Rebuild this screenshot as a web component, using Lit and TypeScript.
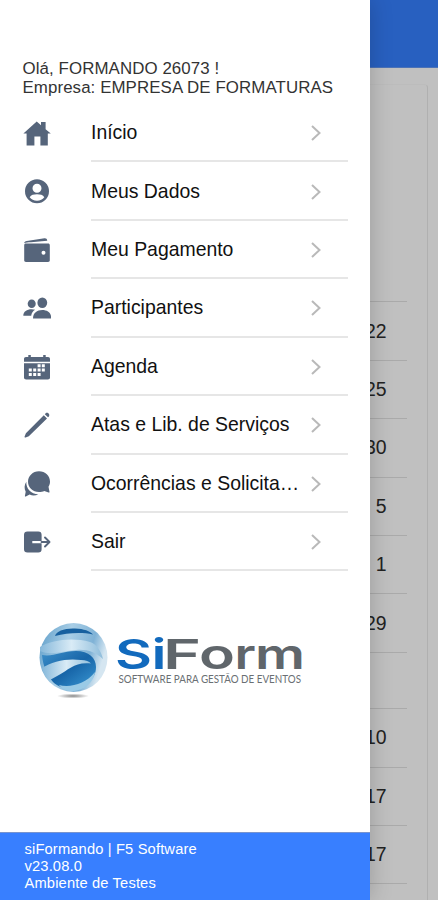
import { LitElement, html, css, svg } from "lit";
import { customElement } from "lit/decorators.js";

const icons = {
  home: svg`<path d="M.4 14.500 13.700 2.500l4.300 3.700V3h4.600v7.200l5.200 4.300h-3V26.500h-7.400v-9h-6v9H3.600v-12z"/>`,
  person: svg`<path fill-rule="evenodd" d="M14 2.3a12 12 0 1 0 0 24 12 12 0 0 0 0-24zm0 4.500a4.500 4.500 0 1 1 0 9 4.500 4.500 0 0 1 0-9zm0 17c-3.200 0-5.600-1.200-7.300-3.500 1.200-2.400 4.200-3 7.300-3s6.100.6 7.300 3c-1.700 2.300-4.100 3.500-7.300 3.500z"/>`,
  wallet: svg`<path d="M1.200 7.300C1.400 6 2.300 5.300 3.700 5.100L21.500 2.300c1.500-.2 2.600.6 2.700 2v.5L8 6.300c-3 .1-5 .4-6.800 1z"/><path fill-rule="evenodd" d="M3 7.600h22c1.200 0 1.800.7 1.800 1.700v15c0 1-.6 1.700-1.800 1.700H3c-1.200 0-1.800-.7-1.800-1.700v-15C1.200 8.300 1.800 7.600 3 7.600zm17.500 7.100a2 2 0 1 0 0 4 2 2 0 0 0 0-4z"/>`,
  people: svg`<ellipse cx="8.700" cy="9.800" rx="4" ry="4.300"/><path d="M.3 21.700c0-4.200 3.700-6.500 8.200-6.500 1.400 0 2.500.2 3.600.6-2.200 1.300-3.500 3.300-3.900 5.900z"/><ellipse cx="19.300" cy="8.800" rx="4.900" ry="5.200"/><path d="M10 24.400c0-5.400 4-8.400 9.300-8.400s9 3 9 8.400z"/>`,
  calendar: svg`<path d="M1 8.700V6c0-1.300.7-2 2-2h2.300V2h2.500v2h12.400V2h2.500v2H25c1.300 0 2 .7 2 2v2.700z"/><path d="M1 10.300h26v14c0 1.400-.8 2.200-2.200 2.200H3.200c-1.400 0-2.200-.8-2.200-2.200z"/><path fill="#fff" d="M14.600 11.200h3v3h-3zm4.200 0h3v3h-3zM5.800 15.500h3v3h-3zm4.400 0h3v3h-3zm4.400 0h3v3h-3zm4.200 0h3v3h-3zM5.800 19.900h3v3h-3zm4.400 0h3v3h-3zm4.400 0h3v3h-3z"/>`,
  pen: svg`<path d="m20.800 4.200 3.200 3.200L5.800 25.200 2.600 26.500c-.7.200-1.300-.4-1-1.100l1.300-3.200zM21.800 3.200l.9-.9c1.900-1.500 4.700 1.200 3.200 3.100l-.9.900z"/>`,
  chat: svg`<path d="M16 1.200c6.300 0 11 4.400 11 10.500 0 2.200-.7 3.500-1.500 5l1 5c.1.700-.3 1-.9.800l-4.300-1.500c-1.500.7-3.200 1.100-5.300 1.100-6.300 0-11-4.500-11-10.300S9.700 1.200 16 1.200z"/><path d="M3.300 11.700c-.4 7 4.700 12.200 12 12.500-2.700 1.600-5.900 1.700-8.700.4l-3.800 1.900c-.6.300-1 0-.9-.6l.8-4.100c-1.600-3.300-1.500-7 .6-10.100z"/>`,
  exit: svg`<path fill-rule="evenodd" d="M4.500 3.500h10.800c2.200 0 3.300 1.200 3.300 3.300v6.100H9.300v2.300h9.300v6c0 2.200-1.100 3.300-3.300 3.300H4.500c-2.300 0-3.500-1.100-3.500-3.300V6.800c0-2.100 1.200-3.300 3.500-3.300z"/><path fill="none" stroke="#56657b" stroke-width="1.900" stroke-linecap="round" stroke-linejoin="round" d="M18.500 14h7.800M22 9.500l4.500 4.500-4.500 4.500"/>`,
};

@customElement("app-root")
export class AppRoot extends LitElement {
  static styles = css`
    :host {
      display: block;
      position: relative;
      height: 900px;
      overflow: hidden;
      background: #c0c0c0;
      color: #222;
      font-family: "Liberation Sans", Arial, sans-serif;
    }
    * { box-sizing: border-box; }
    .page { height: 900px; }
    .toolbar { height: 68px; background: #2860c0; border-bottom: 1px solid #4b72b7; }
    .card {
      height: 816px;
      margin: 16px 10.500px 0 20px;
      padding: 159px 20px 0 0;
      border-right: 1px solid #b0b0b0;
      border-top: 1px solid #bcbcbc;
      border-top-right-radius: 4px;
    }
    .line {
      height: 58.400px;
      border-bottom: 1px solid #aaa;
      display: flex;
      align-items: center;
      justify-content: flex-end;
      padding-right: 20px;
      font-size: 19.400px;
    }
    .blank { height: 56.500px; }
    .menu {
      position: absolute;
      inset: 0 auto 0 0;
      width: 370px;
      background: #fff;
      display: flex;
      flex-direction: column;
      box-shadow: 0 0 22px rgba(0, 0, 0, 0.2);
    }
    .hello { padding: 58.500px 0 0 22.500px; height: 104px; font-size: 16.860px; line-height: 19px; letter-spacing: 0.090px; color: #333; white-space: nowrap; }
    .row { display: flex; height: 58.430px; }
    .icon { width: 28px; height: 28px; margin: 15px 40px 0 23px; flex: none; fill: #56657b; }
    .body {
      width: 257px;
      border-bottom: 2px solid #e6e6e6;
      display: flex;
      align-items: center;
      color: #111;
      font-size: 19.420px;
    }
    .label { width: 210px; line-height: 28px; overflow: hidden; text-overflow: ellipsis; white-space: nowrap; }
    .chev { width: 12px; height: 18px; margin: 2px 0 0 9px; fill: none; stroke: #b9b9b9; stroke-width: 2; }
    .logo { width: 290px; height: 100px; margin: 38px 0 0 30px; }
    .mark { font-family: Inter, sans-serif; font-weight: 600; font-size: 41px; }
    .blue { fill: #126abd; }
    .gray { fill: #60666b; }
    .tag { font-family: Lato, sans-serif; font-size: 11.300px; fill: #6a6f73; }
    .foot {
      margin-top: auto;
      height: 68.500px;
      padding: 8px 0 0 24.500px;
      background: #387fff;
      border-top: 1px solid #7894cf;
      color: #fff;
      font-size: 14.700px;
      letter-spacing: 0.150px;
      line-height: 17px;
    }
  `;

  private row(icon: unknown, label: string) {
    return html`<div class="row">
      <svg class="icon" viewBox="0 0 28 28">${icon}</svg>
      <div class="body">
        <span class="label">${label}</span>
        <svg class="chev" viewBox="0 0 12 18"><path d="m2 2 7.500 7L2 16" /></svg>
      </div>
    </div>`;
  }

  render() {
    return html`
      <div class="page">
        <div class="toolbar"></div>
        <div class="card">
          ${["", "22", "25", "30", "5", "1", "29", "", "10", "17", "17"].map((n, i) =>
            html`<div class="line ${i === 7 ? "blank" : ""}">${n}</div>`)}
        </div>
      </div>
      <div class="menu">
        <div class="hello">Olá, FORMANDO 26073 !<br />Empresa: EMPRESA DE FORMATURAS</div>
        ${this.row(icons.home, "Início")}
        ${this.row(icons.person, "Meus Dados")}
        ${this.row(icons.wallet, "Meu Pagamento")}
        ${this.row(icons.people, "Participantes")}
        ${this.row(icons.calendar, "Agenda")}
        ${this.row(icons.pen, "Atas e Lib. de Serviços")}
        ${this.row(icons.chat, "Ocorrências e Solicitações")}
        ${this.row(icons.exit, "Sair")}
        <svg class="logo" viewBox="0 0 290 100">
          <defs>
            <linearGradient id="shell" x1="0" y1="0" x2="1" y2="0.3">
              <stop offset="0" stop-color="#5b9cc8" /><stop offset=".45" stop-color="#a9cee6" /><stop offset=".8" stop-color="#7fb2d6" /><stop offset="1" stop-color="#d5e6f1" />
            </linearGradient>
            <linearGradient id="band" x1="0" y1="0" x2="1" y2="0">
              <stop offset="0" stop-color="#86b8da" /><stop offset=".5" stop-color="#d9ebf6" /><stop offset="1" stop-color="#8fbddb" />
            </linearGradient>
            <linearGradient id="core" x1="0" y1="0" x2="1" y2="1">
              <stop offset="0" stop-color="#3d8fc9" /><stop offset=".5" stop-color="#1765a8" /><stop offset="1" stop-color="#3c9ad6" />
            </linearGradient>
            <radialGradient id="shade"><stop offset="0" stop-color="#888" /><stop offset="1" stop-color="#fff" /></radialGradient>
          </defs>
          <ellipse cx="43" cy="87" rx="16" ry="2.500" fill="url(#shade)" />
          <ellipse cx="43.500" cy="48.500" rx="34" ry="34.500" fill="url(#shell)" />
          <path fill="#17609f" d="M25 27c1-5 10-8 20-7.500 9 .4 15 2.500 18 6-12-2.500-26-1.500-38 1.500z" />
          <path fill="url(#band)" d="M10 38c12-7 32-10 50-5 7 2.500 11 9 13 17-8-7-16-10-27-9-13 1-25 6-36 1z" />
          <path fill="url(#core)" d="M12 46c12 2 19-4 34-4 13 0 20 7 20 16 0 13-12 22-24 22-8 0-15-3-19-7-6-7-10-16-11-27z" />
          <path fill="url(#band)" d="M12 59c10-7 26-10 39-8 5 0 8 1.500 10 3.500-16-2-22 6-33 12l-9 5c-3-3-6-8-7-12.500z" />
          <path fill="#9acae6" d="M29 76c11 3 27-1 36-13-1 10-11 19-23 19-5 0-10-2-13-6z" />
          <text class="mark" y="60">
            <tspan class="blue" x="85" textLength="37" lengthAdjust="spacingAndGlyphs">S</tspan><tspan class="blue" x="121.500" textLength="15" lengthAdjust="spacingAndGlyphs">i</tspan><tspan class="gray" x="133" textLength="38" lengthAdjust="spacingAndGlyphs">F</tspan><tspan class="gray" x="169" textLength="36" lengthAdjust="spacingAndGlyphs">o</tspan><tspan class="gray" x="204.500" textLength="21" lengthAdjust="spacingAndGlyphs">r</tspan><tspan class="gray" x="225" textLength="50" lengthAdjust="spacingAndGlyphs">m</tspan>
          </text>
          <text class="tag" x="88.500" y="74" textLength="182.500" lengthAdjust="spacingAndGlyphs">SOFTWARE PARA GESTÃO DE EVENTOS</text>
        </svg>
        <div class="foot">siFormando | F5 Software<br />v23.08.0<br />Ambiente de Testes</div>
      </div>
    `;
  }
}
